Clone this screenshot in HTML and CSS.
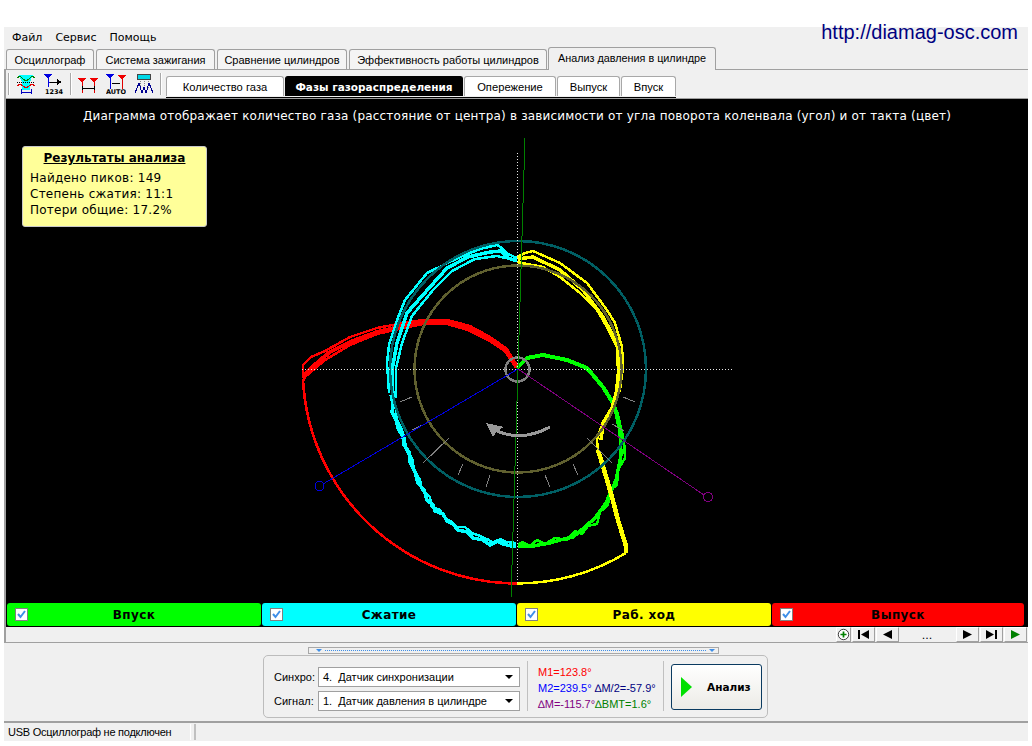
FILE: index.html
```html
<!DOCTYPE html>
<html>
<head>
    <title>Анализ давления в цилиндре</title>
    <link rel="stylesheet" href="styles.css">
</head>
<body>
<div class="app">

    <div class="menu">
        <span>Файл</span>
        <span>Сервис</span>
        <span>Помощь</span>
        <a class="site-url">http://diamag-osc.com</a>
    </div>

    <div class="tabs">
        <div class="tab">Осциллограф</div>
        <div class="tab">Система зажигания</div>
        <div class="tab">Сравнение цилиндров</div>
        <div class="tab">Эффективность работы цилиндров</div>
        <div class="tab active">Анализ давления в цилиндре</div>
    </div>

    <div class="workspace">
        <div class="toolbar">
            <span class="grip"></span>
            <svg class="tool" viewBox="0 0 20 22">
                <path d="M3 2H17L14 9V17H6V9Z" fill="#00ffff"/>
                <path d="M1 5L4 3L7 6L10 8L13 6L16 3L19 5" fill="none" stroke="#008000"/>
                <path d="M1 9H19" stroke="#000" stroke-dasharray="1 1"/>
                <path d="M1 13L4 11L7 13L10 15L13 13L16 11L19 13" fill="none" stroke="#e00000"/>
                <path d="M5 19H15M5 16V21M15 16V21" stroke="#0000c0" fill="none"/>
            </svg>
            <svg class="tool" viewBox="0 0 20 22">
                <path d="M0 1H8L4 6Z" fill="#0000e0"/>
                <path d="M4 5V14M4 9H15" stroke="#0000e0"/>
                <path d="M6 9H14" stroke="#000"/>
                <path d="M13 6L18 9L13 12Z" fill="#000"/>
                <text class="tool-text" x="1" y="21">1234</text>
            </svg>
            <span class="grip"></span>
            <svg class="tool" viewBox="0 0 20 22">
                <path d="M0 5H8L4 10ZM12 5H20L16 10Z" fill="#f00000"/>
                <path d="M4 9V20M16 9V20" stroke="#e00000"/>
                <path d="M4 15H16" stroke="#000"/>
                <path d="M4 13V17M16 13V17" stroke="#000"/>
            </svg>
            <svg class="tool" viewBox="0 0 20 22">
                <path d="M0 1H8L4 6Z" fill="#0000e0"/>
                <path d="M12 2H20L16 7Z" fill="#f00000"/>
                <path d="M4 5V16" stroke="#0000e0"/>
                <path d="M16 6V16" stroke="#e00000"/>
                <path d="M6 10H14" stroke="#000"/>
                <text class="tool-text" x="0" y="21">AUTO</text>
            </svg>
            <svg class="tool" viewBox="0 0 20 22">
                <path d="M3.500 1.500H16.500V6.500H3.500Z" fill="#00d8e8" stroke="#444"/>
                <path d="M6 8V16M10 8V16M14 8V16" stroke="#888" stroke-dasharray="1 1"/>
                <path d="M1 20L5 10L8 20L10 14L12 20L15 10L19 20" fill="none" stroke="#000090"/>
            </svg>
            <span class="grip"></span>

            <div class="subtabs">
                <div class="subtab">Количество газа</div>
                <div class="subtab active">Фазы газораспределения</div>
                <div class="subtab">Опережение</div>
                <div class="subtab">Выпуск</div>
                <div class="subtab">Впуск</div>
            </div>
        </div>

        <div class="chart">
            <svg class="diagram" viewBox="6 99 1021 504" width="1021" height="504">
                <!-- red: exhaust -->
                <g fill="none" stroke="#ff0000" stroke-width="2.500">
                    <polyline points="517,366 507,349 490,337 470,326 447,320 423,320 403,323 377,328 350,337 325,351 311,357 303,365 303,378"/>
                    <polyline stroke-width="4" points="517,367 507,351 490,339 470,329 447,323 423,323 403,326 377,332 350,342 330,352 318,362 303,376"/>
                    <polyline points="516,368 505,351 488,340 468,330 447,324 423,324 403,328 377,334 350,345 325,360 305,377 303,381"/>
                    <path d="M303 380A214.500 214.500 0 0 0 517 583.500"/>
                </g>
                <!-- cyan: compression -->
                <g fill="none" stroke="#00ffff" stroke-width="2.500">
                    <polyline points="517,258 508,254 503,249 497,245 480,249 460,257 427,273 405,300 397,320 389,345 387,363 389,393"/>
                    <polyline stroke-width="3.500" points="517,261 508,258 501,251 490,252 468,257 447,268 430,287 407,313 397,343 392,370 393,397"/>
                    <polyline points="510,259 497,256 475,259 452,271 433,290 412,316 402,343 396,368 396,398"/>
                    <polyline stroke-width="3.500" points="391,395 393,405 392,412 396,420 398,428 403,437 404,445 409,452 410,462 415,472 418,483 424,490 427,500 433,505 435,511 443,514 447,521 453,524 458,530 467,532 473,538 483,540 490,545 497,541 503,544 511,546 516,546"/>
                    <polyline points="394,400 396,410 397,420 402,430 405,440 406,450 412,458 414,470 420,480 422,490 430,497 431,506 440,510 445,518 452,522 457,527 465,527 472,533 480,536 489,540 494,544 500,539 506,542 516,543"/>
                </g>
                <!-- green: intake -->
                <g fill="none" stroke="#00ff00" stroke-width="4">
                    <polyline points="517,368 527,358 543,355 567,360 587,368 603,387 613,403 617,414 623,440"/>
                    <polyline stroke-width="2.500" points="615,410 618,425 624,440 625,458 618,470 617,485 610,490 608,505 600,512 597,524 588,526 582,534 575,531 567,540 555,538 545,544 537,540 530,546 522,542 518,545"/>
                    <polyline stroke-width="3.500" points="620,430 621,455 616,480 606,503 595,518 585,527 573,537 560,540 550,543 533,546 518,546"/>
                </g>
                <!-- yellow: power stroke -->
                <g fill="none" stroke="#ffff00" stroke-width="2.500">
                    <polyline points="517,257 525,253 533,251 560,263 587,283 607,310 615,323 622,347 623,367 620,390 615,402 608,415 600,430 597,440 598,450"/>
                    <polyline stroke-width="3.500" points="518,259 533,257 560,270 583,290 603,317 617,343 619,367 617,390 612,408 603,423 601,440"/>
                    <polyline points="517,262 543,267 560,277 580,293 597,310 607,327 617,347 618,372 616,392"/>
                    <polyline stroke-width="4.500" points="626,553 626,546 618,520 612,497 605,473 598,450"/>
                    <path d="M517 583.500A214 214 0 0 0 626 553"/>
                </g>
                <!-- scale rings -->
                <g fill="none">
                    <circle class="ring-teal" cx="518" cy="369" r="128"/>
                    <circle class="ring-olive" cx="518" cy="369" r="103.500"/>
                    <circle class="ring-hub" cx="517.500" cy="369.500" r="12"/>
                </g>
                <!-- ticks -->
                <path class="ticks" d="M400 402L412 397M412 430L422 425M423 463L449 438M458 475L463 464M486 487L490 475M550 487L545 475M578 475L573 464M587 438L612 463M612 424L624 431M623 397L635 402"/>
                <!-- axes -->
                <path class="axis-dots" d="M302 369H732M517 153V583"/>
                <path class="axis-green" d="M525 138L511 598"/>
                <path class="marker-blue" d="M518 369L323 484"/>
                <circle class="marker-blue" cx="319.500" cy="486" r="4.500"/>
                <path class="marker-purple" d="M518 369L704 495"/>
                <circle class="marker-purple" cx="708" cy="497" r="4.500"/>
                <!-- rotation arrow -->
                <path class="spin" d="M497 431Q522 442 550 427"/>
                <path class="spin-head" d="M486 423L504 427L497 431L493 437Z"/>
            </svg>

            <p class="chart-title">Диаграмма отображает количество газа (расстояние от центра) в зависимости от угла поворота коленвала (угол) и от такта (цвет)</p>

            <div class="note">
                <h4>Результаты анализа</h4>
                <div>Найдено пиков: 149</div>
                <div>Степень сжатия: 11:1</div>
                <div>Потери общие: 17.2%</div>
            </div>
        </div>

        <div class="legend">
            <div class="legend-btn green"><span class="check"><svg viewBox="0 0 11 11"><path d="M2 5L4.500 8L9 2" fill="none" stroke="#3f8fe8" stroke-width="2"/></svg></span><b>Впуск</b></div>
            <div class="legend-btn cyan"><span class="check"><svg viewBox="0 0 11 11"><path d="M2 5L4.500 8L9 2" fill="none" stroke="#3f8fe8" stroke-width="2"/></svg></span><b>Сжатие</b></div>
            <div class="legend-btn yellow"><span class="check"><svg viewBox="0 0 11 11"><path d="M2 5L4.500 8L9 2" fill="none" stroke="#3f8fe8" stroke-width="2"/></svg></span><b>Раб. ход</b></div>
            <div class="legend-btn red"><span class="check"><svg viewBox="0 0 11 11"><path d="M2 5L4.500 8L9 2" fill="none" stroke="#3f8fe8" stroke-width="2"/></svg></span><b>Выпуск</b></div>
        </div>

        <div class="nav">
            <div class="nav-btn add"><svg viewBox="0 0 15 15" width="15" height="15"><circle cx="7.500" cy="7.500" r="6" fill="#fff" stroke="#222"/><path d="M7.500 4V11M4 7.500H11" stroke="#008000" stroke-width="2"/></svg></div>
            <div class="nav-btn"><svg viewBox="0 0 11 9" width="11" height="9"><path d="M0 0H2V9H0ZM11 0V9L3 4.500Z"/></svg></div>
            <div class="nav-btn"><svg viewBox="0 0 9 9" width="9" height="9"><path d="M9 0V9L0 4.500Z"/></svg></div>
            <div class="nav-pos">...</div>
            <div class="nav-btn"><svg viewBox="0 0 9 9" width="9" height="9"><path d="M0 0V9L9 4.500Z"/></svg></div>
            <div class="nav-btn"><svg viewBox="0 0 11 9" width="11" height="9"><path d="M0 0V9L8 4.500ZM9 0H11V9H9Z"/></svg></div>
            <div class="nav-btn"><svg viewBox="0 0 9 9" width="9" height="9"><path d="M0 0V9L9 4.500Z" fill="#008000"/></svg></div>
        </div>
    </div>

    <div class="bottom">
        <div class="splitter"><i class="tri"></i><span class="dots"></span><i class="tri"></i></div>
        <div class="group">
            <div class="sensors">
                <label>Синхро:</label>
                <div class="combo"><span>4.  Датчик синхронизации</span><i class="combo-arrow"></i></div>
                <label>Сигнал:</label>
                <div class="combo"><span>1.  Датчик давления в цилиндре</span><i class="combo-arrow"></i></div>
            </div>
            <span class="vline"></span>
            <div class="values">
                <div class="c-red">М1=123.8°</div>
                <div class="c-blue">М2=239.5° <span class="c-navy">∆М/2=-57.9°</span></div>
                <div class="c-purple">∆М=-115.7°<span class="c-green">∆ВМТ=1.6°</span></div>
            </div>
            <span class="vline"></span>
            <div class="run-btn">
                <svg viewBox="0 0 11 20" width="11" height="20"><path d="M0 0L11 10L0 20Z" fill="#00e000"/></svg>
                <b>Анализ</b>
            </div>
        </div>
    </div>

    <div class="status">
        <div class="status-left">USB Осциллограф не подключен</div>
        <div class="status-right"></div>
    </div>

</div>
</body>
</html>
```

FILE: styles.css
```css
body {
    margin: 0;
    background-color: white;
    font-family: "Liberation Sans", Arial, sans-serif;
    font-size: 11px;
    color: black;
}

.app {
    width: 1024px;
    height: 714px;
    margin: 27px 0 0 4px;
    background-color: #f0f0f0;
    display: flex;
    flex-direction: column;
    overflow: visible;
}

/* menu */
.menu {
    height: 21px;
    flex: none;
    display: flex;
    align-items: center;
    gap: 13px;
    padding-left: 8px;
    font-family: "DejaVu Sans", sans-serif;
    font-size: 11px;
}

.site-url {
    margin-left: auto;
    margin-right: 10px;
    margin-top: -10px;
    font-family: "Liberation Sans", Arial, sans-serif;
    font-size: 20px;
    color: #000080;
}

/* top tabs */
.tabs {
    height: 22px;
    flex: none;
    display: flex;
    align-items: flex-end;
    padding-left: 2px;
    gap: 2px;
    border-bottom: 1px solid #a0a0a0;
    box-sizing: border-box;
}

.tab {
    height: 20px;
    box-sizing: border-box;
    border: 1px solid #a0a0a0;
    border-bottom: none;
    border-radius: 3px 3px 0 0;
    background-color: #f4f4f4;
    display: flex;
    align-items: center;
    justify-content: center;
    white-space: nowrap;
}

.tab:nth-child(1) { width: 88px; }
.tab:nth-child(2) { width: 119px; }
.tab:nth-child(3) { width: 130px; }
.tab:nth-child(4) { width: 198px; }

.tab.active {
    width: 168px;
    height: 23px;
    margin-left: -1px;
    margin-bottom: -1px;
    background-color: #f0f0f0;
    font-size: 10.800px;
    padding-bottom: 2px;
}

/* panel under the tabs */
.workspace {
    flex: none;
    border-left: 2px solid #a0a0a0;
    border-bottom: 1px solid #a0a0a0;
    width: 1022px;
}

.toolbar {
    height: 29px;
    box-sizing: border-box;
    display: flex;
    align-items: center;
    padding-left: 2px;
    border-bottom: 1px solid #a0a0a0;
}

.grip {
    width: 1px;
    height: 22px;
    background-color: #a8a8a8;
    border-right: 1px solid white;
}

.tool {
    width: 20px;
    height: 22px;
    margin-left: 8px;
    shape-rendering: crispEdges;
}

.grip + .tool {
    margin-left: 6px;
}

.tool + .grip {
    margin-left: 6px;
}

.tool-text {
    font-family: "DejaVu Sans", sans-serif;
    font-size: 6.500px;
    font-weight: bold;
}

.subtabs {
    margin-left: 4px;
    align-self: flex-end;
    display: flex;
    gap: 1px;
    height: 22px;
    padding-bottom: 1px;
    box-sizing: border-box;
    border-bottom: 1px solid black;
}

.subtab {
    height: 20px;
    box-sizing: border-box;
    border: 1px solid #a8a8a8;
    border-bottom: none;
    border-radius: 3px 3px 0 0;
    background-color: white;
    display: flex;
    align-items: center;
    justify-content: center;
    white-space: nowrap;
    font-size: 11.200px;
}

.subtab:nth-child(1) { width: 118px; }
.subtab:nth-child(2) { width: 178px; }
.subtab:nth-child(3) { width: 92px; }
.subtab:nth-child(4) { width: 63px; }
.subtab:nth-child(5) { width: 55px; }

.subtab.active {
    background-color: black;
    border-color: black;
    color: white;
    font-family: "DejaVu Sans", sans-serif;
    font-size: 10.500px;
    font-weight: bold;
}

/* black diagram area */
.chart {
    position: relative;
    width: 1022px;
    height: 504px;
    background-color: black;
}

.diagram {
    display: block;
    shape-rendering: crispEdges;
}

.ring-teal {
    stroke: #005f64;
    stroke-width: 2.500;
}

.ring-olive {
    stroke: #60602f;
    stroke-width: 2.500;
}

.ring-hub {
    stroke: #808080;
    stroke-width: 2.500;
}

.ticks {
    stroke: #808080;
    fill: none;
}

.axis-dots {
    stroke: #e8e8e8;
    stroke-dasharray: 1 2;
    fill: none;
}

.axis-green {
    stroke: #008000;
    fill: none;
}

.marker-blue {
    stroke: #0000e0;
    fill: none;
}

.marker-purple {
    stroke: #800080;
    fill: none;
}

.spin {
    stroke: #999;
    stroke-width: 3;
    fill: none;
}

.spin-head {
    fill: #999;
}

.chart-title {
    position: absolute;
    top: 10px;
    left: 0;
    right: 0;
    margin: 0;
    text-align: center;
    color: white;
    font-family: "DejaVu Sans", sans-serif;
    font-size: 12px;
    letter-spacing: 0.180px;
    white-space: nowrap;
}

.note {
    position: absolute;
    left: 16px;
    top: 47px;
    width: 185px;
    height: 81px;
    box-sizing: border-box;
    padding: 3px 7px;
    background-color: #ffff99;
    border: 1px solid #c8c8c8;
    border-radius: 3px;
    font-family: "DejaVu Sans", sans-serif;
    font-size: 12px;
    letter-spacing: 0.250px;
    line-height: 16px;
}

.note h4 {
    margin: 0 0 4px 0;
    text-align: center;
    text-decoration: underline;
    font-size: 12px;
    letter-spacing: 0;
}

/* legend buttons */
.legend {
    height: 24px;
    box-sizing: border-box;
    background-color: black;
    display: flex;
    gap: 1px;
    padding: 0 4px 1px 1px;
    width: 1022px;
}

.legend-btn {
    flex: 1;
    box-sizing: border-box;
    display: grid;
    grid-template-columns: 1fr auto 1fr;
    align-items: center;
    padding-left: 8px;
    padding-right: 8px;
    border-radius: 3px;
    font-family: "DejaVu Sans", sans-serif;
    font-size: 12px;
    letter-spacing: 0.400px;
}

.legend-btn.green { background-color: #00ff00; }
.legend-btn.cyan { background-color: #00ffff; }
.legend-btn.yellow { background-color: #ffff00; }
.legend-btn.red { background-color: #ff0000; flex: 0 0 252px; }

.check {
    width: 13px;
    height: 13px;
    box-sizing: border-box;
    background-color: white;
    border: 1px solid #808080;
    display: block;
}

.check svg {
    display: block;
}

/* navigator */
.nav {
    height: 15px;
    display: flex;
    justify-content: flex-end;
    padding-right: 1px;
}

.nav-btn {
    width: 23px;
    margin-left: 1px;
    box-sizing: border-box;
    border: 1px solid;
    border-color: white #a0a0a0 #a0a0a0 white;
    display: flex;
    align-items: center;
    justify-content: center;
}

.nav-btn.add {
    width: 15px;
}

.nav-pos {
    width: 56px;
    text-align: center;
    line-height: 18px;
    font-family: "DejaVu Sans", sans-serif;
    font-size: 11px;
}

/* lower panel */
.bottom {
    height: 78px;
    flex: none;
    display: flex;
    flex-direction: column;
    align-items: center;
    border-bottom: 2px solid #a0a0a0;
}

.splitter {
    width: 411px;
    height: 7px;
    margin-top: 4px;
    margin-right: 5px;
    box-sizing: border-box;
    border: 1px solid #a8a8a8;
    display: flex;
    align-items: center;
    padding: 0 3px 0 7px;
    gap: 3px;
}

.dots {
    flex: 1;
    border-top: 1px dotted #3f8fe8;
}

.tri {
    width: 0;
    height: 0;
    border: 3px solid transparent;
    border-top: 3px solid #3f8fe8;
    border-bottom: none;
}

.group {
    width: 505px;
    height: 63px;
    margin-top: 1px;
    margin-right: 1px;
    box-sizing: border-box;
    border: 1px solid #bcbcbc;
    border-radius: 5px;
    padding: 5px 0 0 10px;
    display: flex;
    align-items: flex-start;
}

.sensors {
    display: grid;
    grid-template-columns: 44px 202px;
    grid-auto-rows: 20px;
    row-gap: 4px;
    padding-top: 6px;
    align-items: center;
}

.combo {
    height: 20px;
    box-sizing: border-box;
    border: 1px solid #a0a0a0;
    background-color: white;
    display: flex;
    align-items: center;
    justify-content: space-between;
    padding: 0 6px 0 4px;
    white-space: pre;
}

.combo-arrow {
    width: 0;
    height: 0;
    border: 4px solid transparent;
    border-top: 4px solid black;
    border-bottom: none;
}

.vline {
    width: 1px;
    height: 50px;
    background-color: #c0c0c0;
    margin-left: 7px;
    flex: none;
}

.values {
    width: 125px;
    box-sizing: border-box;
    margin-left: 10px;
    margin-right: -7px;
    margin-top: 3px;
    line-height: 16px;
    font-size: 11px;
    white-space: nowrap;
}

.c-red { color: #ff0000; }
.c-blue { color: #0000ff; }
.c-navy { color: #000080; }
.c-purple { color: #800080; }
.c-green { color: #008000; }

.run-btn {
    width: 91px;
    height: 46px;
    box-sizing: border-box;
    margin-left: 7px;
    margin-top: 3px;
    padding-left: 9px;
    border: 1px solid #0a3a60;
    border-radius: 3px;
    background: linear-gradient(#ffffff, #ecebe6);
    display: flex;
    align-items: center;
    gap: 15px;
    font-family: "DejaVu Sans", sans-serif;
    font-size: 10.500px;
}

/* status bar */
.status {
    height: 16px;
    margin-top: 1px;
    display: flex;
    flex: none;
}

.status-left {
    width: 187px;
    padding-left: 4px;
    box-sizing: border-box;
    line-height: 17px;
    font-size: 11px;
    letter-spacing: -0.250px;
    border-right: 1px solid white;
    white-space: nowrap;
}

.status-right {
    flex: 1;
    margin-left: 3px;
    border-left: 2px solid #c0c0c0;
}
```
